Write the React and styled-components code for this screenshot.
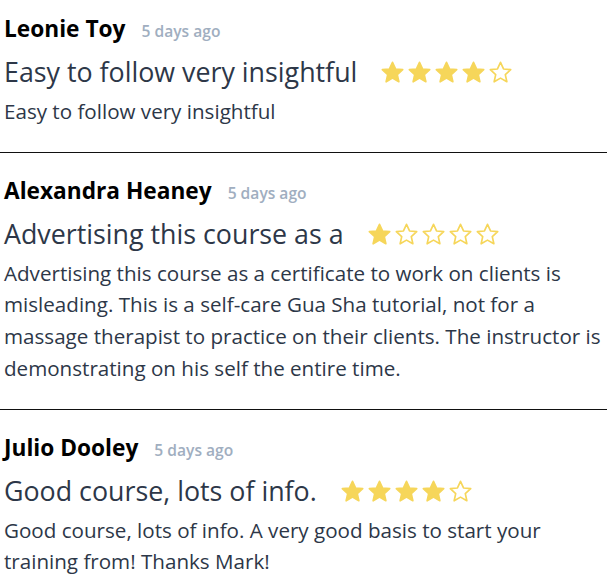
import React from "react";
import styled, { createGlobalStyle } from "styled-components";

const Global = createGlobalStyle`
  html, body { margin: 0; padding: 0; background: #fff; }
  body { font-family: "Open Sans", "Noto Sans", sans-serif; }
`;

const List = styled.div`
  display: flex;
  flex-direction: column;
  margin-top: -9px;
`;

const Item = styled.article`
  padding: 21px 4px 24px;
  border-bottom: ${(p) => (p.$last ? "none" : "1px solid #111")};
`;

const Header = styled.div`
  display: flex;
  align-items: baseline;
  gap: 16px;
`;

const Name = styled.span`
  font-size: 22.7px;
  font-weight: 700;
  color: #000;
  line-height: 34px;
`;

const Time = styled.span`
  font-size: 15.6px;
  font-weight: 600;
  color: #a0aec0;
`;

const TitleRow = styled.div`
  display: flex;
  align-items: center;
  gap: 23px;
  margin-top: 8px;
`;

const Title = styled.h3`
  margin: 0;
  font-size: 26.8px;
  font-weight: 500;
  color: #2d3748;
  line-height: 36px;
`;

const Stars = styled.div`
  display: flex;
  gap: 2px;
  margin-top: 1px;
`;

const Body = styled.p`
  margin: 6px 0 0;
  font-size: 20.6px;
  line-height: 31.7px;
  color: #2d3748;
`;

const STAR =
  "M12 2.2 L14.9 8.6 L21.8 9.3 L16.6 14 L18.1 20.9 L12 17.4 L5.9 20.9 L7.4 14 L2.2 9.3 L9.1 8.6 Z";

function Star({ filled }) {
  return (
    <svg width="25" height="25" viewBox="0 0 24 24">
      <path
        d={STAR}
        fill={filled ? "#f6d65a" : "none"}
        stroke="#f6d65a"
        strokeWidth="1.6"
        strokeLinejoin="round"
      />
    </svg>
  );
}

const reviews = [
  {
    name: "Leonie Toy",
    time: "5 days ago",
    title: "Easy to follow very insightful",
    rating: 4,
    body: "Easy to follow very insightful",
  },
  {
    name: "Alexandra Heaney",
    time: "5 days ago",
    title: "Advertising this course as a",
    rating: 1,
    body:
      "Advertising this course as a certificate to work on clients is misleading. This is a self-care Gua Sha tutorial, not for a massage therapist to practice on their clients. The instructor is demonstrating on his self the entire time.",
  },
  {
    name: "Julio Dooley",
    time: "5 days ago",
    title: "Good course, lots of info.",
    rating: 4,
    body:
      "Good course, lots of info. A very good basis to start your training from! Thanks Mark!",
  },
];

export default function App() {
  return (
    <>
      <Global />
      <List>
        {reviews.map((r, i) => (
          <Item key={i} $last={i === reviews.length - 1}>
            <Header>
              <Name>{r.name}</Name>
              <Time>{r.time}</Time>
            </Header>
            <TitleRow>
              <Title>{r.title}</Title>
              <Stars>
                {[0, 1, 2, 3, 4].map((s) => (
                  <Star key={s} filled={s < r.rating} />
                ))}
              </Stars>
            </TitleRow>
            <Body>{r.body}</Body>
          </Item>
        ))}
      </List>
    </>
  );
}
